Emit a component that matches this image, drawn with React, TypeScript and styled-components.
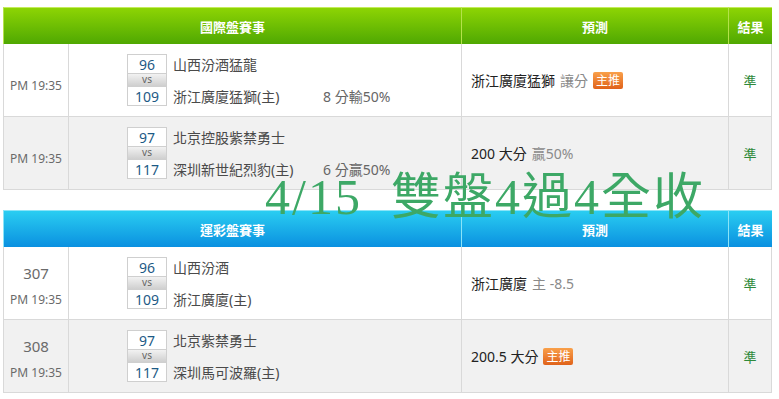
import React, {FC} from 'react';
import styled, {createGlobalStyle, css} from 'styled-components';

const GlobalStyle = createGlobalStyle`
	body {
		margin: 0;
		background: #fff;
		font-family: "Noto Sans", "Noto Sans CJK TC", sans-serif;
	}
`;

const Page = styled.div`
	position: relative;
	width: 779px;
	height: 399px;
	padding: 7px 0 0 3px;
	box-sizing: border-box;
	display: flex;
	flex-direction: column;
	gap: 20px;
	overflow: hidden;
`;

const Table = styled.div`
	display: grid;
	grid-template-columns: 65px 393px 267px 44px;
	width: 769px;
`;

type Tone = 'green' | 'blue';

const Head = styled.div<{$tone: Tone; $span?: number}>`
	height: 37px;
	box-sizing: border-box;
	display: flex;
	align-items: center;
	justify-content: center;
	color: #fff;
	font-size: 13px;
	font-weight: bold;
	grid-column: span ${({$span}) => $span || 1};
	${({$tone}) =>
		$tone === 'green'
			? css`
					background: linear-gradient(#8dd404, #4fa802);
					border-top: 1px solid #c4ec5a;
					border-left: 1px solid #b4e24a;
			  `
			: css`
					background: linear-gradient(#2acdf1, #0a90e0);
					border-top: 1px solid #8ae4f8;
					border-left: 1px solid #8ae4f8;
			  `}
`;

const Cell = styled.div<{$alt?: boolean}>`
	height: 73px;
	box-sizing: border-box;
	background: ${({$alt}) => ($alt ? '#f1f1f1' : '#fff')};
	border-left: 1px solid #d9d9d9;
	border-bottom: 1px solid #d9d9d9;
	display: flex;
	align-items: center;
`;

const TimeCell = styled(Cell)<{$numbered?: boolean}>`
	flex-direction: column;
	justify-content: center;
	gap: 8px;
	padding-top: ${({$numbered}) => ($numbered ? 4 : 10)}px;
	color: #6a6a6a;
`;

const GameNo = styled.div`
	font-size: 15px;
`;

const Clock = styled.div`
	font-size: 12px;
`;

const MatchCell = styled(Cell)`
	padding-left: 58px;
	gap: 6px;
`;

const Scores = styled.div`
	width: 40px;
	display: flex;
	flex-direction: column;
`;

const Score = styled.div`
	height: 20px;
	box-sizing: border-box;
	border: 1px solid #cfcfcf;
	background: #fff;
	color: #1d5a86;
	font-size: 14px;
	display: flex;
	align-items: center;
	justify-content: center;
`;

const Vs = styled.div`
	height: 12px;
	background: linear-gradient(#f2f2f2, #cfcfcf);
	border-left: 1px solid #cfcfcf;
	border-right: 1px solid #cfcfcf;
	color: #666;
	font-size: 10px;
	line-height: 11px;
	text-align: center;
`;

const Teams = styled.div`
	display: flex;
	flex-direction: column;
	gap: 12px;
`;

const TeamRow = styled.div`
	display: flex;
	height: 20px;
	align-items: center;
	font-size: 14px;
	color: #4a4a4a;
`;

const TeamName = styled.span`
	width: 150px;
`;

const Spread = styled.span`
	color: #666;
`;

const PickCell = styled(Cell)`
	padding-left: 9px;
	font-size: 14px;
	color: #222;
	gap: 5px;
`;

const Muted = styled.span`
	color: #8a8a8a;
`;

const Badge = styled.span`
	display: inline-flex;
	align-items: center;
	justify-content: center;
	height: 17px;
	padding: 0 3px;
	border-radius: 2px;
	background: linear-gradient(#f9a04a, #e0621a);
	color: #fff;
	font-size: 12px;
`;

const ResultCell = styled(Cell)`
	justify-content: center;
	color: #2e8a3a;
	font-size: 13px;
	border-right: 1px solid #d9d9d9;
`;

const Stamp = styled.div`
	position: absolute;
	left: 265px;
	top: 172px;
	color: #3da866;
	font-family: "Liberation Serif", "Noto Sans CJK TC", serif;
	font-size: 50px;
	letter-spacing: 2px;
	white-space: pre;
	line-height: 1;
`;

interface Game {
	no?: string;
	home: [string, string];
	away: [string, string];
	spread?: string;
	pick: React.ReactNode;
}

const intl: Game[] = [
	{
		home: ['96', '山西汾酒猛龍'],
		away: ['109', '浙江廣廈猛獅(主)'],
		spread: '8 分輸50%',
		pick: (
			<>
				浙江廣廈猛獅 <Muted>讓分</Muted>
				<Badge>主推</Badge>
			</>
		),
	},
	{
		home: ['97', '北京控股紫禁勇士'],
		away: ['117', '深圳新世紀烈豹(主)'],
		spread: '6 分贏50%',
		pick: (
			<>
				200 大分 <Muted>贏50%</Muted>
			</>
		),
	},
];

const lottery: Game[] = [
	{
		no: '307',
		home: ['96', '山西汾酒'],
		away: ['109', '浙江廣廈(主)'],
		pick: (
			<>
				浙江廣廈 <Muted>主 -8.5</Muted>
			</>
		),
	},
	{
		no: '308',
		home: ['97', '北京紫禁勇士'],
		away: ['117', '深圳馬可波羅(主)'],
		pick: (
			<>
				200.5 大分<Badge>主推</Badge>
			</>
		),
	},
];

const Block: FC<{tone: Tone; title: string; games: Game[]}> = ({tone, title, games}) => (
	<Table>
		<Head $tone={tone} $span={2}>
			{title}
		</Head>
		<Head $tone={tone}>預測</Head>
		<Head $tone={tone}>結果</Head>
		{games.map((g, i) => {
			const alt = i % 2 === 1;
			return (
				<React.Fragment key={i}>
					<TimeCell $alt={alt} $numbered={!!g.no}>
						{g.no && <GameNo>{g.no}</GameNo>}
						<Clock>PM 19:35</Clock>
					</TimeCell>
					<MatchCell $alt={alt}>
						<Scores>
							<Score>{g.home[0]}</Score>
							<Vs>vs</Vs>
							<Score>{g.away[0]}</Score>
						</Scores>
						<Teams>
							<TeamRow>
								<TeamName>{g.home[1]}</TeamName>
							</TeamRow>
							<TeamRow>
								<TeamName>{g.away[1]}</TeamName>
								{g.spread && <Spread>{g.spread}</Spread>}
							</TeamRow>
						</Teams>
					</MatchCell>
					<PickCell $alt={alt}>{g.pick}</PickCell>
					<ResultCell $alt={alt}>準</ResultCell>
				</React.Fragment>
			);
		})}
	</Table>
);

export default function App() {
	return (
		<Page>
			<GlobalStyle />
			<Block tone="green" title="國際盤賽事" games={intl} />
			<Block tone="blue" title="運彩盤賽事" games={lottery} />
			<Stamp>{'4/15  雙盤4過4全收'}</Stamp>
		</Page>
	);
}
